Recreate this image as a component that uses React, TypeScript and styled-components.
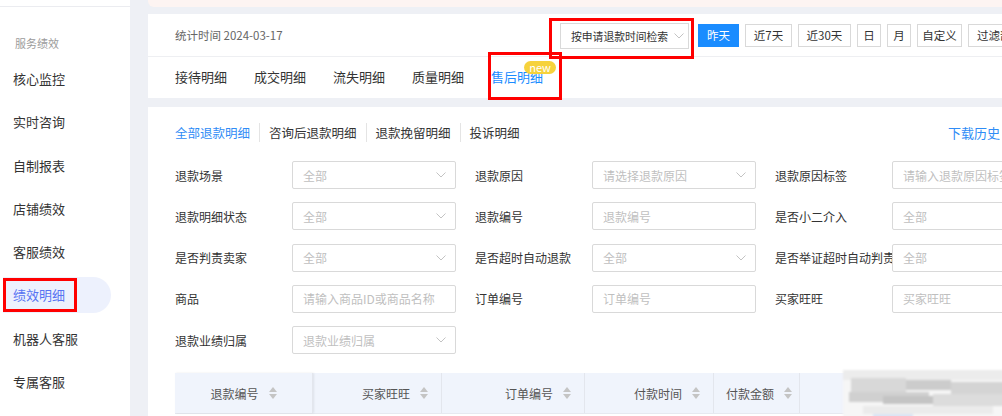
import React from "react";
import styled, { createGlobalStyle } from "styled-components";

const GlobalStyle = createGlobalStyle`
  html, body { margin: 0; padding: 0; background: #eef0f5; overflow: hidden; }
  body { font-family: "Noto Sans CJK SC", "Noto Sans", sans-serif; color: #333; }
  * { box-sizing: border-box; }
`;

const Page = styled.div`
  display: flex;
  width: 1002px;
  height: 416px;
  overflow: hidden;
  background: #eef0f5;
`;

/* ---------- sidebar ---------- */
const Sidebar = styled.aside`
  flex: 0 0 130px;
  background: #fff;
  padding-top: 6px;
`;

const SideRule = styled.div`
  height: 1px;
  background: #ebecf0;
`;

const GroupTitle = styled.div`
  height: 54px;
  padding: 28px 0 0 15px;
  font-size: 11px;
  line-height: 16px;
  color: #9b9b9b;
`;

const MenuItem = styled.div<{ $active?: boolean }>`
  position: relative;
  width: 108px;
  height: 36px;
  margin: 0 0 7.3px 3px;
  padding-left: 10px;
  font-size: 13px;
  line-height: 36px;
  color: ${(p) => (p.$active ? "#5874f2" : "#333")};
  background: ${(p) => (p.$active ? "#edf1fd" : "transparent")};
  border-radius: 0 18px 18px 0;
`;

const Marker = styled.span<{ $l: number; $t: number; $w: number; $h: number }>`
  position: absolute;
  left: ${(p) => p.$l}px;
  top: ${(p) => p.$t}px;
  width: ${(p) => p.$w}px;
  height: ${(p) => p.$h}px;
  border: 3px solid #ff0000;
  pointer-events: none;
  z-index: 5;
`;

/* ---------- main column ---------- */
const Main = styled.main`
  flex: 0 0 879px;
  width: 879px;
  min-width: 0;
  margin-left: 18px;
  display: flex;
  flex-direction: column;
`;

const Notice = styled.div`
  height: 7px;
  margin-bottom: 7px;
  background: #fdf4f2;
  border-radius: 0 0 6px 6px;
`;

const HeaderCard = styled.section`
  height: 84px;
  margin-bottom: 9px;
  background: #fff;
`;

const StatRow = styled.div`
  display: flex;
  align-items: center;
  height: 43px;
  padding-left: 27px;
  border-bottom: 1px solid #eeeff2;
`;

const StatText = styled.span`
  flex: 0 0 385px;
  font-size: 11.5px;
  color: #666;
`;

const ModeSelect = styled.div`
  position: relative;
  display: flex;
  align-items: center;
  justify-content: space-between;
  flex: 0 0 129px;
  min-width: 0;
  height: 26px;
  margin-top: 1px;
  padding: 0 4px 0 10px;
  border: 1px solid #d9d9d9;
  font-size: 10.8px;
  color: #333;
  white-space: nowrap;
`;

const QuickGroup = styled.div`
  display: flex;
  gap: 6px;
  margin-left: 9px;
`;

const QuickButton = styled.button<{ $primary?: boolean; $w: number }>`
  flex: 0 0 ${(p) => p.$w}px;
  height: 23px;
  padding: 0;
  border: 1px solid ${(p) => (p.$primary ? "#1a8cff" : "#d9d9d9")};
  background: ${(p) => (p.$primary ? "#1a8cff" : "#fff")};
  color: ${(p) => (p.$primary ? "#fff" : "#333")};
  font-family: inherit;
  font-size: 11.5px;
  white-space: nowrap;
  overflow: hidden;
  text-align: ${(p) => (p.$w > 60 ? "left" : "center")};
  padding-left: ${(p) => (p.$w > 60 ? "8px" : "0")};
`;

const TabRow = styled.nav`
  display: flex;
  align-items: center;
  gap: 27px;
  height: 40px;
  padding-left: 27px;
`;

const Tab = styled.span<{ $active?: boolean }>`
  position: relative;
  font-size: 13px;
  line-height: 20px;
  color: ${(p) => (p.$active ? "#1a8cff" : "#333")};
`;

const NewBadge = styled.span`
  position: absolute;
  left: 33px;
  top: -6px;
  width: 32px;
  height: 13px;
  border-radius: 7px;
  background: #f6d23c;
  color: #fff;
  font-size: 11px;
  line-height: 13px;
  text-align: center;
`;

/* ---------- detail card ---------- */
const BodyCard = styled.section`
  flex: 1;
  min-width: 0;
  padding: 15px 27px 0;
  background: #fff;
`;

const SubTabRow = styled.div`
  display: flex;
  align-items: center;
  height: 20px;
`;

const SubTab = styled.span<{ $active?: boolean }>`
  padding: 0 9px;
  font-size: 12.5px;
  line-height: 19px;
  white-space: nowrap;
  color: ${(p) => (p.$active ? "#2f8cf6" : "#333")};
  &:first-child { padding-left: 0; }
  & + & { border-left: 1px solid #e4e4e4; }
`;

const DownloadLink = styled.span`
  margin-left: auto;
  font-size: 13px;
  white-space: nowrap;
  color: #2f8cf6;
`;

const FormGrid = styled.div`
  display: grid;
  grid-template-columns: repeat(3, 300px);
  row-gap: 13.3px;
  margin-top: 19px;
`;

const Field = styled.div`
  display: flex;
  align-items: center;
  height: 28px;
`;

const FieldLabel = styled.span`
  flex: 0 0 117px;
  font-size: 12px;
  color: #333;
  white-space: nowrap;
  overflow: hidden;
`;

const Control = styled.div`
  display: flex;
  align-items: center;
  justify-content: space-between;
  flex: 0 0 164px;
  height: 28px;
  padding: 0 9px 0 10px;
  border: 1px solid #d9d9d9;
  border-radius: 2px;
  background: #fff;
  font-size: 12px;
  color: #bfbfbf;
  white-space: nowrap;
  overflow: hidden;
`;

/* ---------- table ---------- */
const TableHead = styled.div`
  position: relative;
  display: flex;
  height: 41px;
  margin-top: 19px;
  background: #f0f4fc;
  border-bottom: 1px solid #e6e9f0;
`;

const HeadCell = styled.div<{ $w?: number; $align: "center" | "right" | "left"; $fixed?: boolean }>`
  display: flex;
  align-items: center;
  gap: 10px;
  flex: ${(p) => (p.$w ? `0 0 ${p.$w}px` : "1")};
  justify-content: ${(p) =>
    p.$align === "center" ? "center" : p.$align === "right" ? "flex-end" : "flex-start"};
  padding: 0 ${(p) => (p.$align === "right" ? "13px" : "0")} 0 ${(p) => (p.$align === "left" ? "12px" : "0")};
  border-right: 1px solid #e3e6ed;
  box-shadow: ${(p) => (p.$fixed ? "1px 0 2px rgba(0,0,0,0.08)" : "none")};
  font-size: 12px;
  color: #555;
  &:last-child { border-right: none; }
`;

const Redaction = styled.div`
  position: absolute;
  left: 668px;
  top: -3px;
  width: 170px;
  height: 50px;
  background: #f6f6f6;
  filter: blur(1.2px);
  overflow: hidden;
`;

const Smudge = styled.span<{ $l: number; $t: number; $w: number; $h: number; $c: string }>`
  position: absolute;
  left: ${(p) => p.$l}px;
  top: ${(p) => p.$t}px;
  width: ${(p) => p.$w}px;
  height: ${(p) => p.$h}px;
  background: ${(p) => p.$c};
`;

const Chevron = () => (
  <svg width="10" height="6" viewBox="0 0 10 6" fill="none">
    <path d="M0.5 0.5 L5 5 L9.5 0.5" stroke="#c3c3c3" strokeWidth="1" />
  </svg>
);

const SortIcon = () => (
  <svg width="8" height="12" viewBox="0 0 8 12">
    <path d="M4 0 L8 5 L0 5 Z" fill="#c4c4c4" />
    <path d="M0 7 L8 7 L4 12 Z" fill="#c4c4c4" />
  </svg>
);

type FieldDef = { label: string; hint: string; select?: boolean };

const fields: FieldDef[] = [
  { label: "退款场景", hint: "全部", select: true },
  { label: "退款原因", hint: "请选择退款原因", select: true },
  { label: "退款原因标签", hint: "请输入退款原因标签" },
  { label: "退款明细状态", hint: "全部", select: true },
  { label: "退款编号", hint: "退款编号" },
  { label: "是否小二介入", hint: "全部" },
  { label: "是否判责卖家", hint: "全部", select: true },
  { label: "是否超时自动退款", hint: "全部", select: true },
  { label: "是否举证超时自动判责", hint: "全部" },
  { label: "商品", hint: "请输入商品ID或商品名称" },
  { label: "订单编号", hint: "订单编号" },
  { label: "买家旺旺", hint: "买家旺旺" },
  { label: "退款业绩归属", hint: "退款业绩归属", select: true },
];

const menu = ["核心监控", "实时咨询", "自制报表", "店铺绩效", "客服绩效", "绩效明细", "机器人客服", "专属客服"];

const quick = [
  { text: "昨天", w: 41, primary: true },
  { text: "近7天", w: 47 },
  { text: "近30天", w: 53 },
  { text: "日", w: 24 },
  { text: "月", w: 24 },
  { text: "自定义", w: 45 },
  { text: "过滤部分数据", w: 80 },
];

const columns: { title: string; w?: number; align: "center" | "right" | "left"; fixed?: boolean }[] = [
  { title: "退款编号", w: 138, align: "center", fixed: true },
  { title: "买家旺旺", w: 129, align: "right" },
  { title: "订单编号", w: 143, align: "right" },
  { title: "付款时间", w: 129, align: "right" },
  { title: "付款金额", w: 86, align: "left" },
];

export default function App() {
  return (
    <>
      <GlobalStyle />
      <Page>
        <Sidebar>
          <SideRule />
          <GroupTitle>服务绩效</GroupTitle>
          {menu.map((m) => (
            <MenuItem key={m} $active={m === "绩效明细"}>
              {m}
              {m === "绩效明细" && <Marker $l={0} $t={1} $w={74} $h={34} />}
            </MenuItem>
          ))}
        </Sidebar>

        <Main>
          <Notice />
          <HeaderCard>
            <StatRow>
              <StatText>统计时间 2024-03-17</StatText>
              <ModeSelect>
                按申请退款时间检索
                <Chevron />
                <Marker $l={-12} $t={-6} $w={145} $h={41} />
              </ModeSelect>
              <QuickGroup>
                {quick.map((q) => (
                  <QuickButton key={q.text} $w={q.w} $primary={q.primary}>
                    {q.text}
                  </QuickButton>
                ))}
              </QuickGroup>
            </StatRow>
            <TabRow>
              <Tab>接待明细</Tab>
              <Tab>成交明细</Tab>
              <Tab>流失明细</Tab>
              <Tab>质量明细</Tab>
              <Tab $active>
                售后明细
                <NewBadge>new</NewBadge>
                <Marker $l={-3} $t={-15} $w={74} $h={48} />
              </Tab>
            </TabRow>
          </HeaderCard>

          <BodyCard>
            <SubTabRow>
              <SubTab $active>全部退款明细</SubTab>
              <SubTab>咨询后退款明细</SubTab>
              <SubTab>退款挽留明细</SubTab>
              <SubTab>投诉明细</SubTab>
              <DownloadLink>下载历史</DownloadLink>
            </SubTabRow>

            <FormGrid>
              {fields.map((f) => (
                <Field key={f.label}>
                  <FieldLabel>{f.label}</FieldLabel>
                  <Control>
                    {f.hint}
                    {f.select && <Chevron />}
                  </Control>
                </Field>
              ))}
            </FormGrid>

            <TableHead>
              {columns.map((c) => (
                <HeadCell key={c.title} $w={c.w} $align={c.align} $fixed={c.fixed}>
                  {c.title}
                  <SortIcon />
                </HeadCell>
              ))}
              <HeadCell $align="left" />
              <Redaction>
                <Smudge $l={0} $t={0} $w={170} $h={10} $c="#ececec" />
                <Smudge $l={8} $t={8} $w={55} $h={14} $c="#d8d8d8" />
                <Smudge $l={63} $t={10} $w={45} $h={10} $c="#cccccc" />
                <Smudge $l={108} $t={12} $w={62} $h={14} $c="#d4d4d4" />
                <Smudge $l={6} $t={22} $w={80} $h={10} $c="#d0d0d0" />
                <Smudge $l={40} $t={26} $w={50} $h={8} $c="#c4c4c4" />
                <Smudge $l={90} $t={24} $w={75} $h={12} $c="#dcdcdc" />
                <Smudge $l={20} $t={36} $w={130} $h={8} $c="#ebebeb" />
                <Smudge $l={30} $t={44} $w={40} $h={6} $c="#dbe5f5" />
              </Redaction>
            </TableHead>
          </BodyCard>
        </Main>
      </Page>
    </>
  );
}
